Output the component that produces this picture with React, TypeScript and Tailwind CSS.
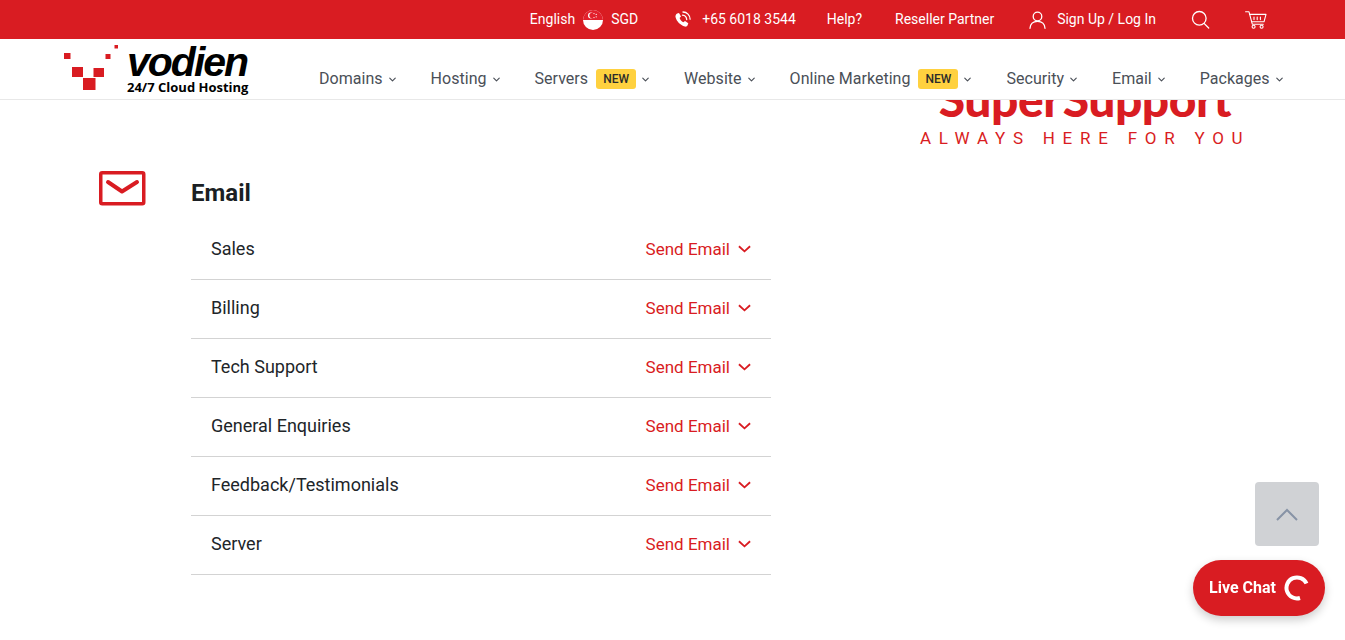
import { ChevronDown } from "lucide-react";

const navItems = [
  { label: "Domains" },
  { label: "Hosting" },
  { label: "Servers", isNew: true },
  { label: "Website" },
  { label: "Online Marketing", isNew: true },
  { label: "Security" },
  { label: "Email" },
  { label: "Packages" },
];

const emailRows = ["Sales", "Billing", "Tech Support", "General Enquiries", "Feedback/Testimonials", "Server"];

function LogoMark() {
  return (
    <svg width="56" height="47" viewBox="0 0 56 47" className="shrink-0" fill="#d91c22">
      <rect x="0" y="8" width="6.5" height="6" />
      <rect x="8" y="22" width="11" height="10" />
      <rect x="29.5" y="23" width="10.5" height="9" />
      <rect x="19" y="33" width="12.5" height="12" />
      <rect x="41.5" y="9" width="5" height="5" />
      <rect x="50.5" y="0" width="3.5" height="3.5" />
    </svg>
  );
}

function SingaporeFlag() {
  return (
    <svg width="20" height="20" viewBox="0 0 20 20">
      <circle cx="10" cy="10" r="10" fill="#fff" />
      <path d="M0 10a10 10 0 0 1 20 0z" fill="#e2202c" />
      <circle cx="8" cy="5.6" r="3" fill="#fff" />
      <circle cx="9.2" cy="5.6" r="2.8" fill="#e2202c" />
      <circle cx="11" cy="3.6" r="0.6" fill="#fff" />
      <circle cx="13.2" cy="4.4" r="0.6" fill="#fff" />
      <circle cx="13.2" cy="6.8" r="0.6" fill="#fff" />
      <circle cx="11" cy="7.6" r="0.6" fill="#fff" />
    </svg>
  );
}

function PhoneIcon() {
  return (
    <svg width="18" height="18" viewBox="0 0 18 18" fill="none">
      <path
        d="M4.2 2.6 6 2l2 3.6-1.4 1.5c.5 1.6 2 3.4 3.7 4.2L12 10l3.3 2.2-.6 1.9c-.5 1.1-1.6 1.9-2.8 1.5C7.3 14.400 3.500 10.400 2.500 6.100c-.3-1.500.6-2.900 1.700-3.500z"
        fill="#fff"
      />
      <path d="M9.500 4.200c2.300.2 4 2 4.200 4.300M10 1c4 .1 7 3.200 7.100 7.200" stroke="#fff" strokeWidth="1.300" strokeLinecap="round" />
    </svg>
  );
}

function UserIcon() {
  return (
    <svg width="17" height="18" viewBox="0 0 17 18" fill="none" stroke="#fff" strokeWidth="1.300" strokeLinecap="round">
      <circle cx="8.500" cy="5.500" r="4.300" />
      <path d="M1 17.300c.3-4.200 3-7 7.500-7s7.200 2.800 7.500 7" />
    </svg>
  );
}

function SearchIcon() {
  return (
    <svg width="19" height="19" viewBox="0 0 19 19" fill="none" stroke="#fff" strokeWidth="1.300" strokeLinecap="round">
      <circle cx="8.300" cy="8.300" r="6.800" />
      <path d="m13.300 13.600 4.400 4.400" />
    </svg>
  );
}

function CartIcon() {
  return (
    <svg width="22" height="18" viewBox="0 0 22 18" fill="none" stroke="#fff" strokeWidth="1.100" strokeLinecap="round" strokeLinejoin="round">
      <path d="M0.600 0.800h3.400l3.300 12.400h11" />
      <path d="M4.600 3.400h16.400l-2 7.400H6.500" />
      <path d="M9 6v2.600M12.200 6v2.600M15.400 6v2.600" />
      <circle cx="8.600" cy="15.700" r="1.500" />
      <circle cx="16.600" cy="15.700" r="1.500" />
    </svg>
  );
}

function TopBar() {
  return (
    <div className="h-[39px] bg-[#d91c22] flex items-center justify-end pr-[78px] text-white text-[14px] font-['Roboto',sans-serif]">
      <span>English</span>
      <span className="ml-2"><SingaporeFlag /></span>
      <span className="ml-2">SGD</span>
      <span className="ml-[35px]"><PhoneIcon /></span>
      <span className="ml-[11px]">+65 6018 3544</span>
      <span className="ml-[31px]">Help?</span>
      <span className="ml-[33px]">Reseller Partner</span>
      <span className="ml-[35px]"><UserIcon /></span>
      <span className="ml-[11px]">Sign Up / Log In</span>
      <span className="ml-[35px]"><SearchIcon /></span>
      <span className="ml-[35px]"><CartIcon /></span>
    </div>
  );
}

function MainNav() {
  return (
    <div className="h-[61px] bg-white border-b border-[#e8e8e8] flex">
      <div className="ml-[64px] mt-[6px] flex w-[255px] shrink-0">
        <LogoMark />
        <div className="ml-[7px] -mt-[3px] text-black">
          <div className="font-['Liberation_Sans',sans-serif] font-bold italic text-[41px] leading-[40px] tracking-[-2px]">vodien</div>
          <div className="font-['Open_Sans',sans-serif] font-bold text-[13px] leading-[14px] -mt-[2px] whitespace-nowrap">24/7 Cloud Hosting</div>
        </div>
      </div>
      <nav className="flex items-center gap-[33px] h-[60px] pt-[20px] font-['Roboto',sans-serif] text-[16px] tracking-[0.03px] text-[#4a4f57]">
        {navItems.map((item) => (
          <div key={item.label} className="flex items-center whitespace-nowrap">
            <span>{item.label}</span>
            {item.isNew && (
              <span className="ml-2 w-10 h-5 rounded-[3px] bg-[#ffd13f] text-[#2b2b2b] text-[12px] font-medium flex items-center justify-center tracking-normal">
                NEW
              </span>
            )}
            <ChevronDown size={11} strokeWidth={2.5} className="ml-[4px] mt-[1px]" />
          </div>
        ))}
      </nav>
    </div>
  );
}

function EmailRow({ label }: { label: string }) {
  return (
    <div className="h-[59px] border-b border-[#d3d3d3] flex items-center justify-between pl-5 pr-5 text-[18px]">
      <span className="text-[#212529] -mt-[4px]">{label}</span>
      <span className="flex items-center text-[#d91c22] text-[17px]">
        Send Email
        <svg width="13" height="8" viewBox="0 0 14 8" fill="none" stroke="#d91c22" strokeWidth="2" className="ml-2 -mt-[2px]">
          <path d="m1 1 6 5.500L13 1" />
        </svg>
      </span>
    </div>
  );
}

export default function App() {
  return (
    <div className="h-[640px] overflow-hidden bg-white font-['Roboto',sans-serif]">
      <header className="fixed top-0 left-0 right-0 z-10">
        <TopBar />
        <MainNav />
      </header>

      <main className="flex pt-[72px]">
        <div className="ml-[99px] mt-[99px] w-[92px] shrink-0">
          <svg width="47" height="35" viewBox="0 0 47 35" fill="none" stroke="#d91c22" strokeWidth="3.500">
            <rect x="1.750" y="1.750" width="43" height="31" rx="1.500" />
            <path d="m9 11 14 9.500L38 11" strokeWidth="4" strokeLinecap="round" strokeLinejoin="round" />
          </svg>
        </div>
        <div className="w-[580px] shrink-0 mt-[106px]">
          <h2 className="text-[24px] leading-[30px] font-bold text-[#1b1f24] mb-[13px]">Email</h2>
          <div className="mt-[1px]">
            {emailRows.map((row) => (
              <EmailRow key={row} label={row} />
            ))}
          </div>
        </div>
        <div className="ml-[149px] w-[330px] shrink-0 text-center">
          <div className="font-['Lato',sans-serif] font-black text-[48px] leading-[56px] -mt-[1px] mb-[1px] text-[#d91c22] tracking-[-0.5px] [word-spacing:-8px] whitespace-nowrap">
            Super Support
          </div>
          <div className="text-[17px] leading-5 text-[#d91c22] tracking-[7.750px] whitespace-nowrap">
            ALWAYS HERE FOR YOU
          </div>
        </div>
      </main>

      <button className="fixed left-[1255px] top-[482px] w-16 h-16 rounded-[4px] bg-[#d0d2d5] flex items-center justify-center">
        <svg width="22" height="13" viewBox="0 0 22 13" fill="none" stroke="#8793a6" strokeWidth="2">
          <path d="m1 12 10-10 10 10" />
        </svg>
      </button>

      <button className="fixed left-[1193px] top-[560px] w-[132px] h-14 rounded-full bg-[#d91c22] shadow-[0_4px_10px_rgba(0,0,0,0.2)] flex items-center pl-4 text-white text-[16px] font-bold">
        Live Chat
        <svg width="26" height="26" viewBox="0 0 26 26" fill="none" stroke="#fff" strokeWidth="4" className="ml-[8px]">
          <path d="M22.500 8.500A10.500 10.500 0 1 0 16 23" />
        </svg>
      </button>
    </div>
  );
}
